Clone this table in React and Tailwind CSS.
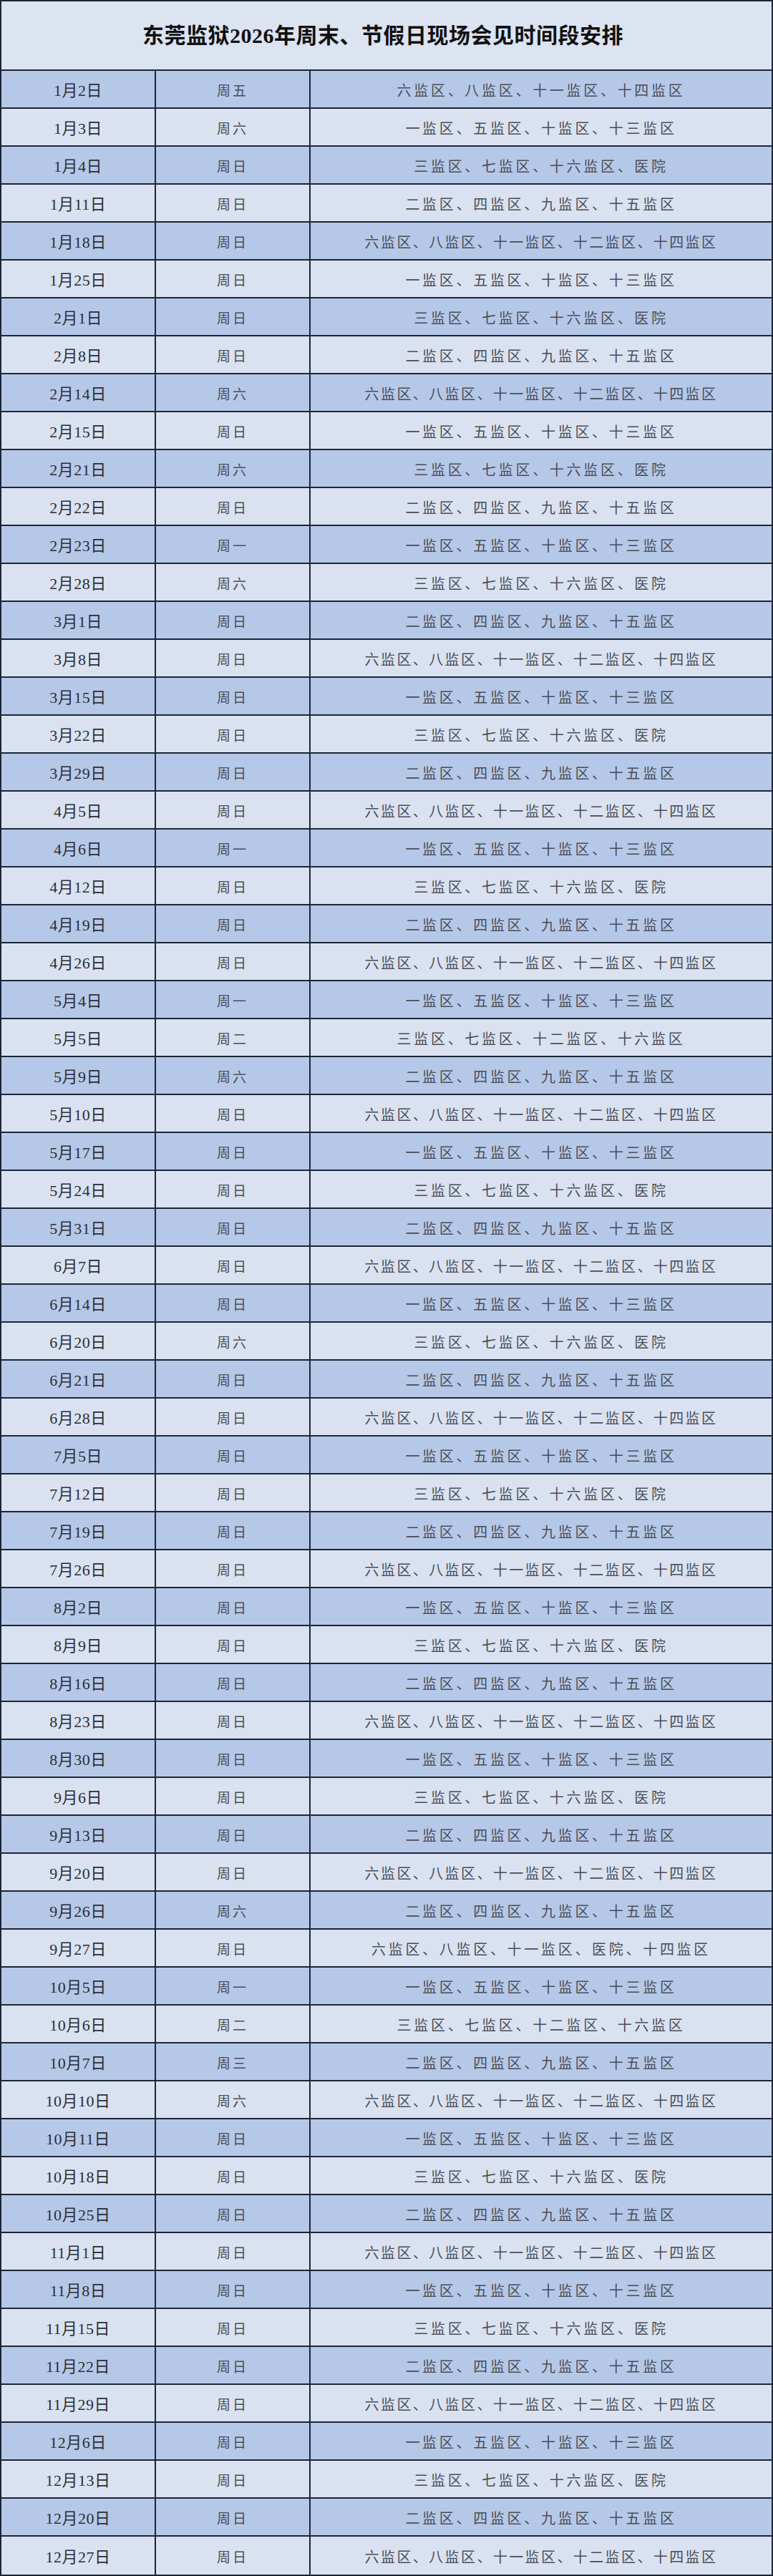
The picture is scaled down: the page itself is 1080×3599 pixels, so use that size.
import React from "react";

const A = "六监区、八监区、十一监区、十二监区、十四监区";
const B = "一监区、五监区、十监区、十三监区";
const C = "三监区、七监区、十六监区、医院";
const D = "二监区、四监区、九监区、十五监区";
const E = "三监区、七监区、十二监区、十六监区";

const rows = [
  ["1月2日", "周五", "六监区、八监区、十一监区、十四监区"],
  ["1月3日", "周六", B],
  ["1月4日", "周日", C],
  ["1月11日", "周日", D],
  ["1月18日", "周日", A],
  ["1月25日", "周日", B],
  ["2月1日", "周日", C],
  ["2月8日", "周日", D],
  ["2月14日", "周六", A],
  ["2月15日", "周日", B],
  ["2月21日", "周六", C],
  ["2月22日", "周日", D],
  ["2月23日", "周一", B],
  ["2月28日", "周六", C],
  ["3月1日", "周日", D],
  ["3月8日", "周日", A],
  ["3月15日", "周日", B],
  ["3月22日", "周日", C],
  ["3月29日", "周日", D],
  ["4月5日", "周日", A],
  ["4月6日", "周一", B],
  ["4月12日", "周日", C],
  ["4月19日", "周日", D],
  ["4月26日", "周日", A],
  ["5月4日", "周一", B],
  ["5月5日", "周二", E],
  ["5月9日", "周六", D],
  ["5月10日", "周日", A],
  ["5月17日", "周日", B],
  ["5月24日", "周日", C],
  ["5月31日", "周日", D],
  ["6月7日", "周日", A],
  ["6月14日", "周日", B],
  ["6月20日", "周六", C],
  ["6月21日", "周日", D],
  ["6月28日", "周日", A],
  ["7月5日", "周日", B],
  ["7月12日", "周日", C],
  ["7月19日", "周日", D],
  ["7月26日", "周日", A],
  ["8月2日", "周日", B],
  ["8月9日", "周日", C],
  ["8月16日", "周日", D],
  ["8月23日", "周日", A],
  ["8月30日", "周日", B],
  ["9月6日", "周日", C],
  ["9月13日", "周日", D],
  ["9月20日", "周日", A],
  ["9月26日", "周六", D],
  ["9月27日", "周日", "六监区、八监区、十一监区、医院、十四监区"],
  ["10月5日", "周一", B],
  ["10月6日", "周二", E],
  ["10月7日", "周三", D],
  ["10月10日", "周六", A],
  ["10月11日", "周日", B],
  ["10月18日", "周日", C],
  ["10月25日", "周日", D],
  ["11月1日", "周日", A],
  ["11月8日", "周日", B],
  ["11月15日", "周日", C],
  ["11月22日", "周日", D],
  ["11月29日", "周日", A],
  ["12月6日", "周日", B],
  ["12月13日", "周日", C],
  ["12月20日", "周日", D],
  ["12月27日", "周日", A],
];

const serif = { fontFamily: '"Liberation Serif", "Noto Sans CJK SC", serif' };
const cjk = { fontFamily: '"Noto Sans CJK SC", "Liberation Serif", sans-serif' };

export default function App() {
  return (
    <div className="w-[1080px] bg-white">
      <div className="w-[1080px] border-2 border-[#1c2536] bg-[#dbe2f1]">
        <div className="h-[97px] border-b-2 border-[#1c2536] flex items-center justify-center bg-[#dce3f1]">
          <h1
            className="text-[30px] font-bold text-[#111] tracking-[0.5px] pr-[10px]"
            style={serif}
          >
            东莞监狱2026年周末、节假日现场会见时间段安排
          </h1>
        </div>
        {rows.map((r, i) => {
          const blue = i % 2 === 0;
          const last = i === rows.length - 1;
          const long = r[2].length > 20;
          return (
            <div
              key={i}
              className={
                "flex h-[53px] " +
                (last ? "h-[51px] " : "border-b-2 border-[#1c2536] ") +
                (blue ? "bg-[#b6c8e8]" : "bg-[#dae2f1]")
              }
            >
              <div
                className="w-[216px] border-r-2 border-[#1c2536] flex items-center justify-center text-[22px] text-[#2b2e35] tracking-[0.5px] pt-[3px]"
                style={serif}
              >
                {r[0]}
              </div>
              <div
                className="w-[216px] border-r-2 border-[#1c2536] flex items-center justify-center text-[19px] text-[#4a4d55] tracking-[3px] pt-[3px]"
                style={cjk}
              >
                {r[1]}
              </div>
              <div
                className={
                  "flex-1 flex items-center justify-center text-[20px] text-[#4a4d55] pt-[3px] " +
                  (long ? "tracking-[2.4px]" : "tracking-[3.7px]")
                }
                style={cjk}
              >
                {r[2]}
              </div>
            </div>
          );
        })}
      </div>
    </div>
  );
}
